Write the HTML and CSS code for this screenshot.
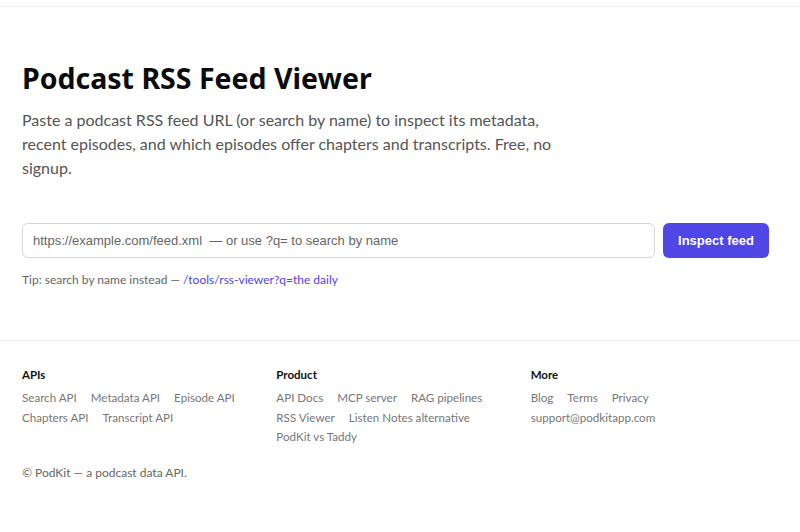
FILE: index.html
```html
<!DOCTYPE html>
<html lang="en">
<head>
<meta charset="utf-8">
<title>Podcast RSS Feed Viewer</title>
<link rel="stylesheet" href="styles.css">
</head>
<body>
<div class="topbar"></div>
<main class="main">
  <h1 class="title">Podcast RSS Feed Viewer</h1>
  <p class="lead">Paste a podcast RSS feed URL (or search by name) to inspect its metadata, recent episodes, and which episodes offer chapters and transcripts. Free, no signup.</p>
  <form class="form">
    <input class="input" type="text" placeholder="https://example.com/feed.xml  — or use ?q= to search by name">
    <button class="btn" type="button">Inspect feed</button>
  </form>
  <p class="tip">Tip: search by name instead — <a class="tip-link" href="#">/tools/rss-viewer?q=the daily</a></p>
</main>
<footer class="footer">
  <div class="cols">
    <div class="col">
      <h4 class="col-title">APIs</h4>
      <div class="links">
        <a href="#">Search API</a><a href="#">Metadata API</a><a href="#">Episode API</a><a href="#">Chapters API</a><a href="#">Transcript API</a>
      </div>
    </div>
    <div class="col">
      <h4 class="col-title">Product</h4>
      <div class="links">
        <a href="#">API Docs</a><a href="#">MCP server</a><a href="#">RAG pipelines</a><a href="#">RSS Viewer</a><a href="#">Listen Notes alternative</a><a href="#">PodKit vs Taddy</a>
      </div>
    </div>
    <div class="col">
      <h4 class="col-title">More</h4>
      <div class="links">
        <a href="#">Blog</a><a href="#">Terms</a><a href="#">Privacy</a><a href="#">support@podkitapp.com</a>
      </div>
    </div>
  </div>
  <p class="copy">© PodKit — a podcast data API.</p>
</footer>
</body>
</html>
```
FILE: styles.css
```css
* { box-sizing: border-box; }
html, body { margin: 0; padding: 0; background: #fff; }
body { font-family: Lato, "Noto Sans", sans-serif; color: #111; }
.topbar { height: 7px; border-bottom: 1px solid #ececec; }
.main { padding: 53px 31px 0 22px; }
.title { margin: 0; font-family: "Noto Sans", sans-serif; font-size: 28.5px; font-weight: 700; line-height: 36px; color: #0b0b0b; }
.lead { margin: 12px 0 0; max-width: 540px; font-size: 16px; line-height: 24px; color: #555; }
.form { display: flex; gap: 8px; margin-top: 43px; }
.input { flex: 1; height: 35px; border: 1px solid #d6d6d6; border-radius: 6px; padding: 0 10px; font-family: "Liberation Sans", Arial, sans-serif; font-size: 13px; color: #333; outline: none; }
.input::placeholder { color: #666; }
.btn { width: 106px; height: 35px; border: 0; border-radius: 6px; background: #4f46e5; color: #fff; font-family: "Liberation Sans", Arial, sans-serif; font-weight: 700; font-size: 13px; }
.tip { margin: 14px 0 0; font-size: 12px; line-height: 16px; color: #666; }
.tip-link { color: #4f46e5; text-decoration: none; }
.footer { margin-top: 52px; border-top: 1px solid #eeeeee; padding: 26px 31px 0 22px; }
.cols { display: grid; grid-template-columns: repeat(3, 1fr); gap: 16px; }
.col-title { margin: 0 0 5px; font-size: 11.5px; line-height: 16px; font-weight: 700; color: #111; }
.links { display: flex; flex-wrap: wrap; column-gap: 14px; }
.links a { font-size: 11.6px; line-height: 19.5px; color: #777; text-decoration: none; }
.copy { margin: 18px 0 0; font-size: 12px; line-height: 16px; color: #666; }
```
